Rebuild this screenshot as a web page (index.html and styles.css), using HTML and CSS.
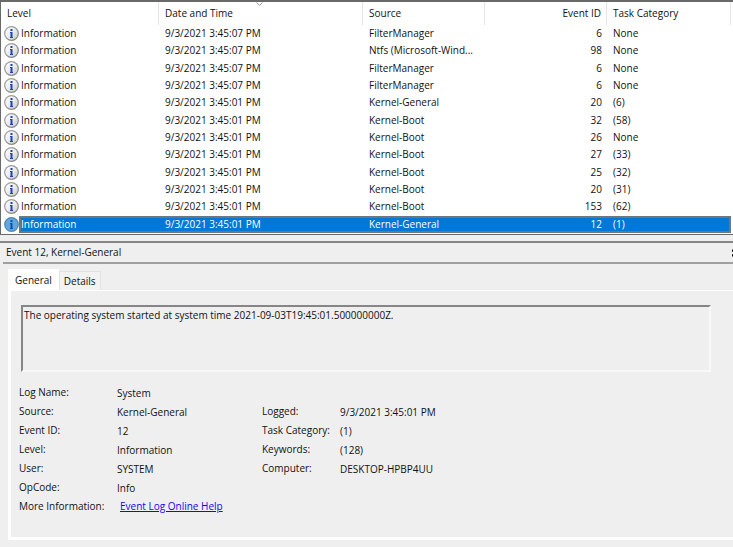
FILE: index.html
```
<!DOCTYPE html>
<html lang="en">
<head>
  <meta charset="UTF-8" />
  <meta name="viewport" content="width=device-width, initial-scale=1.0"/>
  <title>Event Viewer</title>
  <link rel="stylesheet" href="styles.css">
</head>
<body>
  <svg class="defs" width="0" height="0" aria-hidden="true">
    <defs>
      <linearGradient id="ring" x1="0" y1="0" x2="1" y2="1">
        <stop offset="0" stop-color="#a8a8a8"/>
        <stop offset="1" stop-color="#7c7c7c"/>
      </linearGradient>
      <linearGradient id="face" x1="0" y1="0" x2="1" y2="1">
        <stop offset="0" stop-color="#ffffff"/>
        <stop offset="0.5" stop-color="#ececec"/>
        <stop offset="1" stop-color="#c8c8c8"/>
      </linearGradient>
      <symbol id="info" viewBox="0 0 15 15">
        <circle class="ring" cx="7.5" cy="7.5" r="7.4"/>
        <circle class="face" cx="7.5" cy="7.5" r="6.2"/>
        <path class="glyph" d="M6.5 3h2v2h-2zM6 6h2.500v5H9v1H6v-1h.5V7H6z"/>
      </symbol>
    </defs>
  </svg>

  <main class="viewer">
    <section class="event-list">
      <table>
        <colgroup>
          <col class="col-level"><col class="col-date"><col class="col-source"><col class="col-id"><col class="col-task"><col>
        </colgroup>
        <thead>
          <tr>
            <th>Level</th>
            <th class="sorted">Date and Time
              <svg class="sort" viewBox="0 0 7 4" width="7" height="4"><path d="M.5 .5l3 3 3-3" fill="none" stroke="#999"/></svg>
            </th>
            <th>Source</th>
            <th class="num">Event ID</th>
            <th>Task Category</th>
            <th></th>
          </tr>
        </thead>
        <tbody id="events"></tbody>
      </table>
    </section>

    <section class="preview">
      <header class="preview-title">
        <h2>Event 12, Kernel-General</h2>
        <button type="button" class="close" aria-label="Close">
          <svg viewBox="0 0 8 8" width="8" height="8"><path d="M0 1l7 6M7 1l-7 6" stroke="#000" stroke-width="2"/></svg>
        </button>
      </header>

      <div class="tabs" role="tablist">
        <button type="button" role="tab" class="tab active" aria-selected="true">General</button>
        <button type="button" role="tab" class="tab" aria-selected="false">Details</button>
      </div>

      <div class="page" role="tabpanel">
        <textarea class="message" aria-label="Description" readonly>The operating system started at system time 2021-09-03T19:45:01.500000000Z.</textarea>

        <dl class="fields">
          <dt>Log Name:</dt><dd class="wide">System</dd>
          <dt>Source:</dt><dd>Kernel-General</dd>
          <dt>Logged:</dt><dd>9/3/2021 3:45:01 PM</dd>
          <dt>Event ID:</dt><dd>12</dd>
          <dt>Task Category:</dt><dd>(1)</dd>
          <dt>Level:</dt><dd>Information</dd>
          <dt>Keywords:</dt><dd>(128)</dd>
          <dt>User:</dt><dd>SYSTEM</dd>
          <dt>Computer:</dt><dd>DESKTOP-HPBP4UU</dd>
          <dt>OpCode:</dt><dd class="wide">Info</dd>
          <dt>More Information:</dt><dd class="wide link"><a href="#">Event Log Online Help</a></dd>
        </dl>
      </div>
    </section>
  </main>

  <script>
    const events = [
      ["9/3/2021 3:45:07 PM", "FilterManager", 6, "None"],
      ["9/3/2021 3:45:07 PM", "Ntfs (Microsoft-Wind...", 98, "None"],
      ["9/3/2021 3:45:07 PM", "FilterManager", 6, "None"],
      ["9/3/2021 3:45:07 PM", "FilterManager", 6, "None"],
      ["9/3/2021 3:45:01 PM", "Kernel-General", 20, "(6)"],
      ["9/3/2021 3:45:01 PM", "Kernel-Boot", 32, "(58)"],
      ["9/3/2021 3:45:01 PM", "Kernel-Boot", 26, "None"],
      ["9/3/2021 3:45:01 PM", "Kernel-Boot", 27, "(33)"],
      ["9/3/2021 3:45:01 PM", "Kernel-Boot", 25, "(32)"],
      ["9/3/2021 3:45:01 PM", "Kernel-Boot", 20, "(31)"],
      ["9/3/2021 3:45:01 PM", "Kernel-Boot", 153, "(62)"],
      ["9/3/2021 3:45:01 PM", "Kernel-General", 12, "(1)"]
    ];

    const tbody = document.getElementById('events');

    events.forEach(([date, source, id, task], i) => {
      const row = document.createElement('tr');
      if (i === events.length - 1) row.className = 'selected';
      row.innerHTML = `
        <td class="level"><div><svg class="icon" width="15" height="15"><use href="#info"/></svg><span>Information</span></div></td>
        <td>${date}</td><td>${source}</td><td class="num">${id}</td><td class="task">${task}</td><td class="rest"></td>`;
      tbody.appendChild(row);
    });
  </script>
</body>
</html>
```
FILE: styles.css
```
* {
  box-sizing: border-box;
}

body {
  margin: 0;
  font-family: "Open Sans", "Noto Sans", sans-serif;
  font-size: 10px;
  line-height: 17px;
  color: #111;
  background: #efefef;
}

.defs {
  position: absolute;
}

.viewer {
  min-height: 100vh;
  overflow: hidden;
}

/* event list */
.event-list {
  background: #fff;
  border: 1px solid #696969;
  border-width: 2px 0 1px 1px;
  padding-bottom: 1px;
}

table {
  width: 100%;
  height: 231px;
  table-layout: fixed;
  border-collapse: separate;
  border-spacing: 0;
}

.col-level { width: 158px; }
.col-date { width: 204px; }
.col-source { width: 122px; }
.col-id { width: 122px; }
.col-task { width: 124px; }

th, td {
  padding: 0 5px 0 6px;
  text-align: left;
  font-weight: normal;
  white-space: nowrap;
}

th {
  height: 23px;
  border-right: 1px solid #e5e5e5;
}

th:last-child {
  border-right: none;
}

.sorted {
  position: relative;
}

.sort {
  position: absolute;
  top: 0;
  left: 48%;
}

.num {
  text-align: right;
}

.level {
  padding: 0;
}

.level div {
  display: flex;
  align-items: center;
  padding-left: 3px;
}

.icon {
  flex: none;
}

.ring { fill: var(--ring, url(#ring)); }
.face { fill: var(--face, url(#face)); }
.glyph { fill: var(--glyph, #1d43b8); }

.level span {
  flex: 1;
  padding-left: 2px;
}

.selected td,
.selected .level span {
  color: #fff;
  background: #0078d7;
  box-shadow: inset 0 2px #6d7780, inset 0 -2px #6d7780;
}

.selected .level,
.selected .rest {
  background: none;
  box-shadow: none;
}

.selected .level span {
  box-shadow: inset 2px 2px #6d7780, inset 0 -2px #6d7780;
}

.selected .task {
  box-shadow: inset -2px 2px #6d7780, inset 0 -2px #6d7780;
}

.selected .icon {
  --ring: #4a86b4;
  --face: #62a7dc;
  --glyph: #0c4fb0;
}

/* preview pane */
.preview {
  margin-top: 6px;
  border-top: 2px solid #868686;
}

.preview-title {
  display: flex;
  align-items: center;
  justify-content: space-between;
  height: 21px;
  margin-left: 3px;
  margin-right: -7px;
  border-bottom: 2px solid #a0a0a0;
}

h2 {
  margin: 0 3px;
  font-size: 10px;
  font-weight: normal;
}

.close {
  display: flex;
  padding: 0;
  border: none;
  background: none;
}

.tabs {
  display: flex;
  align-items: flex-end;
  height: 26px;
  padding-left: 8px;
}

.tab {
  height: 19px;
  padding: 0 4px;
  border: 1px solid #e2e2e2;
  border-bottom: none;
  background: #f2f2f2;
  font: inherit;
  color: inherit;
}

.tab.active {
  height: 21px;
  padding: 0 6px;
  border-color: #fff;
  background: #fff;
}

.page {
  margin-left: 8px;
  padding: 14px 22px 20px 8px;
  border: 3px solid #fff;
  border-top-width: 1px;
  border-right: none;
}

.message {
  display: block;
  width: calc(100% - 2px);
  height: 67px;
  margin-left: 2px;
  padding: 0 1px;
  border: 2px solid #868686;
  border-right-color: #f8f8f8;
  border-bottom-color: #f8f8f8;
  outline: none;
  resize: none;
  background: #efefef;
  font: inherit;
  color: inherit;
}

.fields {
  display: grid;
  grid-template-columns: 98px 145px 78px 1fr;
  grid-auto-rows: 19px;
  margin: 12px 0 0;
}

dt, dd {
  margin: 0;
  white-space: nowrap;
}

dd {
  padding-top: 1px;
}

.wide {
  grid-column: 2 / -1;
}

.link {
  padding: 0 0 0 3px;
}

a {
  color: #1a00ff;
}
```
